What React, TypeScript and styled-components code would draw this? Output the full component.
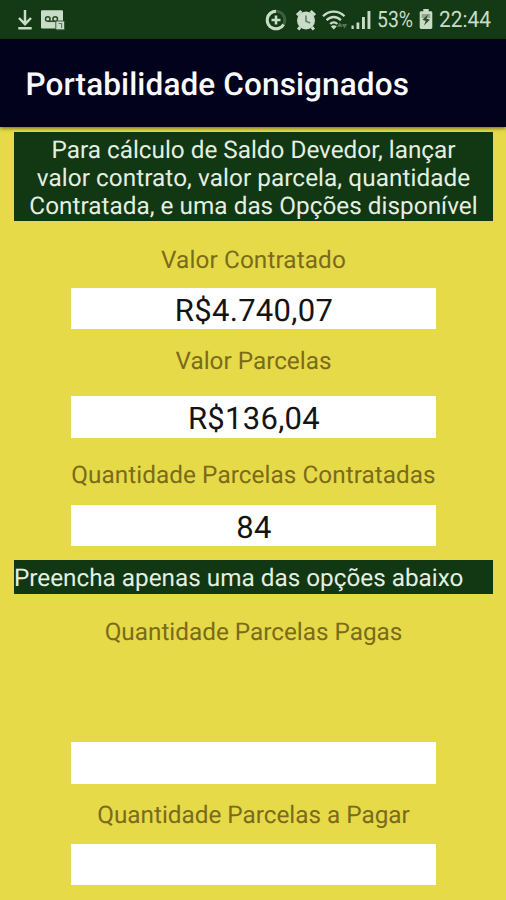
import React from "react";
import styled, { createGlobalStyle } from "styled-components";

const GlobalStyle = createGlobalStyle`
  *, *::before, *::after { box-sizing: border-box; }
  html, body { margin: 0; padding: 0; background: #e6da48; }
  body { font-family: Roboto, "Liberation Sans", sans-serif; overflow: hidden; text-rendering: geometricPrecision; }
`;

const Screen = styled.div`
  display: flex;
  flex-direction: column;
  width: 506px;
  height: 900px;
  overflow: hidden;
  background: #e6da48;
`;

const StatusBar = styled.header`
  display: flex;
  align-items: center;
  justify-content: space-between;
  flex: none;
  height: 39px;
  padding: 0 16px 0 17px;
  background: #133a14;
  color: #c9dcc8;
`;

const StatusGroup = styled.div`
  display: flex;
  align-items: center;
  height: 39px;
`;

const Glyph = styled.svg<{ $gap?: number }>`
  display: block;
  flex: none;
  margin-left: ${({ $gap = 0 }) => $gap}px;
`;

const StatusText = styled.span<{ $width: number; $scale: number; $gap: number }>`
  width: ${({ $width }) => $width}px;
  margin-left: ${({ $gap }) => $gap}px;
  font-size: 22.5px;
  line-height: 38px;
  white-space: nowrap;
  transform: scaleX(${({ $scale }) => $scale});
  transform-origin: left center;
`;

const AppBar = styled.div`
  display: flex;
  align-items: center;
  flex: none;
  height: 88px;
  padding: 3px 0 0 25.5px;
  background: #02021d;
  box-shadow: 0 1px 4px rgba(40, 38, 0, 0.7);
  z-index: 1;
`;

const Title = styled.h1`
  margin: 0;
  color: #fafafc;
  font-size: 31.5px;
  font-weight: 500;
  line-height: 38px;
  letter-spacing: 0.12px;
  white-space: nowrap;
`;

const Form = styled.main`
  display: flex;
  flex-direction: column;
  align-items: center;
  padding: 5px 13px 0 14px;
`;

const Notice = styled.p<{ $align: "center" | "left"; $top?: number; $height: number; $pad: number }>`
  align-self: stretch;
  height: ${({ $height }) => $height}px;
  margin: ${({ $top = 0 }) => $top}px 0 0;
  padding-top: ${({ $pad }) => $pad}px;
  background: #123713;
  color: #e4efe2;
  font-size: 24.3px;
  line-height: 28px;
  text-align: ${({ $align }) => $align};
  white-space: nowrap;
`;

const NoticeLine = styled.span<{ $spacing?: number }>`
  display: block;
  letter-spacing: ${({ $spacing = 0 }) => $spacing}px;
`;

const Label = styled.label<{ $top: number; $spacing?: number }>`
  margin-top: ${({ $top }) => $top}px;
  color: #7a6b1b;
  font-size: 24.3px;
  line-height: 28px;
  letter-spacing: ${({ $spacing = 0 }) => $spacing}px;
  white-space: nowrap;
`;

const Field = styled.div<{ $top: number; $height: number }>`
  width: 365px;
  height: ${({ $height }) => $height}px;
  margin-top: ${({ $top }) => $top}px;
  padding: 3px 0 0 1px;
  background: #fff;
  color: #141414;
  font-size: 31px;
  line-height: 40px;
  letter-spacing: 0.3px;
  text-align: center;
`;

const DownloadIcon = () => (
  <Glyph width="16" height="22" viewBox="0 0 16 22" fill="none" stroke="currentColor" strokeWidth="2.5">
    <path d="M8 1V15M2 9l6 6.2L14 9M1.3 19.3h13.4" />
  </Glyph>
);

const VoicemailIcon = () => (
  <Glyph $gap={8} width="25" height="22" viewBox="0 0 25 22">
    <rect x="0" y="1.2" width="22" height="18.4" rx="1" fill="currentColor" />
    <g fill="none" stroke="#294a2a" strokeWidth="1.5">
      <circle cx="6.8" cy="10" r="2.3" />
      <circle cx="14.2" cy="10" r="2.3" />
      <path d="M6.8 12.3h7.4" />
    </g>
    <rect x="14.8" y="12" width="8.7" height="8.8" rx="1" fill="currentColor" stroke="#3c5a3c" strokeWidth="1" />
    <path d="M17.6 14.5h3v4.5" fill="none" stroke="#5f7b60" strokeWidth="1.2" />
  </Glyph>
);

const DataSaverIcon = () => (
  <Glyph width="22" height="24" viewBox="0 0 22 24" fill="none" stroke="currentColor">
    <circle cx="11" cy="12" r="8.8" stroke="#3d613d" strokeWidth="3" />
    <path d="M11 3.2a8.8 8.8 0 1 0 7.6 13.2" strokeWidth="3" />
    <path d="M11 7.5v9M6.5 12h9" strokeWidth="2.6" />
  </Glyph>
);

const AlarmIcon = () => (
  <Glyph $gap={9} width="20" height="24" viewBox="0 0 20 24" fill="currentColor">
    <circle cx="10" cy="12.5" r="9" />
    <path d="M1 7.2 5.4 3M19 7.2 14.6 3M4.2 19l-2 2.6M15.8 19l2 2.6" stroke="currentColor" strokeWidth="3" />
    <path d="M10 7.6v5.6l4.2 1.8" fill="none" stroke="#647d63" strokeWidth="1.6" />
  </Glyph>
);

const WifiIcon = () => (
  <Glyph $gap={6} width="26" height="24" viewBox="0 0 26 24" fill="none" stroke="currentColor" strokeWidth="2.3">
    <path d="M1 8.2c6-6.2 15.5-6.2 21.5 0M4.6 12.2c4.1-4.3 10.2-4.3 14.3 0M8.2 16c2.1-2.2 5-2.2 7.1 0" />
    <path d="m8.900 18.400 2.900 3.200 2.900-3.200c-1.600-1.400-4.200-1.400-5.800 0z" fill="currentColor" stroke="none" />
    <path d="m14.800 18.800 3-4.300 3 4.300zM19.800 16h5.400l-2.700 4.400z" fill="#557556" stroke="none" />
  </Glyph>
);

const SignalIcon = () => (
  <Glyph $gap={3} width="21" height="24" viewBox="0 0 21 24" fill="currentColor">
    <path d="M.5 17.500h2.200v3.500H.500zM5.500 14.500h2.800V21H5.500zM11 9h2.900v12H11zM16.500 3h2.900v18h-2.900z" />
  </Glyph>
);

const BatteryIcon = () => (
  <Glyph $gap={6} width="14" height="24" viewBox="0 0 14 24">
    <path d="M4.3 1h5.4v2.300h2.200c.8 0 1.400.6 1.400 1.400v14.900c0 .8-.6 1.400-1.400 1.400H2.100c-.8 0-1.400-.6-1.400-1.400V4.700c0-.8.6-1.400 1.400-1.400h2.200z" fill="currentColor" />
    <path d="M2.700 6h8.600v4H2.700z" fill="#91a890" />
    <path d="M9.300 6.300 3.400 11.700l3.300 1.200-1.800 4.700 6-5.900-3.500-1.200z" fill="#2c502c" />
  </Glyph>
);

export default function App() {
  return (
    <>
      <GlobalStyle />
      <Screen>
        <StatusBar>
          <StatusGroup>
            <DownloadIcon />
            <VoicemailIcon />
          </StatusGroup>
          <StatusGroup>
            <DataSaverIcon />
            <AlarmIcon />
            <WifiIcon />
            <SignalIcon />
            <StatusText $width={36} $scale={0.862} $gap={5}>53%</StatusText>
            <BatteryIcon />
            <StatusText $width={51} $scale={0.925} $gap={6}>22:44</StatusText>
          </StatusGroup>
        </StatusBar>
        <AppBar>
          <Title>Portabilidade Consignados</Title>
        </AppBar>
        <Form>
          <Notice $align="center" $height={89} $pad={4}>
            <NoticeLine>Para cálculo de Saldo Devedor, lançar</NoticeLine>
            <NoticeLine $spacing={0.07}>valor contrato, valor parcela, quantidade</NoticeLine>
            <NoticeLine $spacing={0.03}>Contratada, e uma das Opções disponível</NoticeLine>
          </Notice>
          <Label $top={25} $spacing={0.12}>Valor Contratado</Label>
          <Field $top={14} $height={41}>R$4.740,07</Field>
          <Label $top={18}>Valor Parcelas</Label>
          <Field $top={21} $height={42}>R$136,04</Field>
          <Label $top={23} $spacing={0.06}>Quantidade Parcelas Contratadas</Label>
          <Field $top={16} $height={41}>84</Field>
          <Notice $align="left" $top={14} $height={34} $pad={4}>Preencha apenas uma das opções abaixo</Notice>
          <Label $top={24}>Quantidade Parcelas Pagas</Label>
          <Field $top={96} $height={42} />
          <Label $top={17}>Quantidade Parcelas a Pagar</Label>
          <Field $top={15} $height={41} />
        </Form>
      </Screen>
    </>
  );
}
